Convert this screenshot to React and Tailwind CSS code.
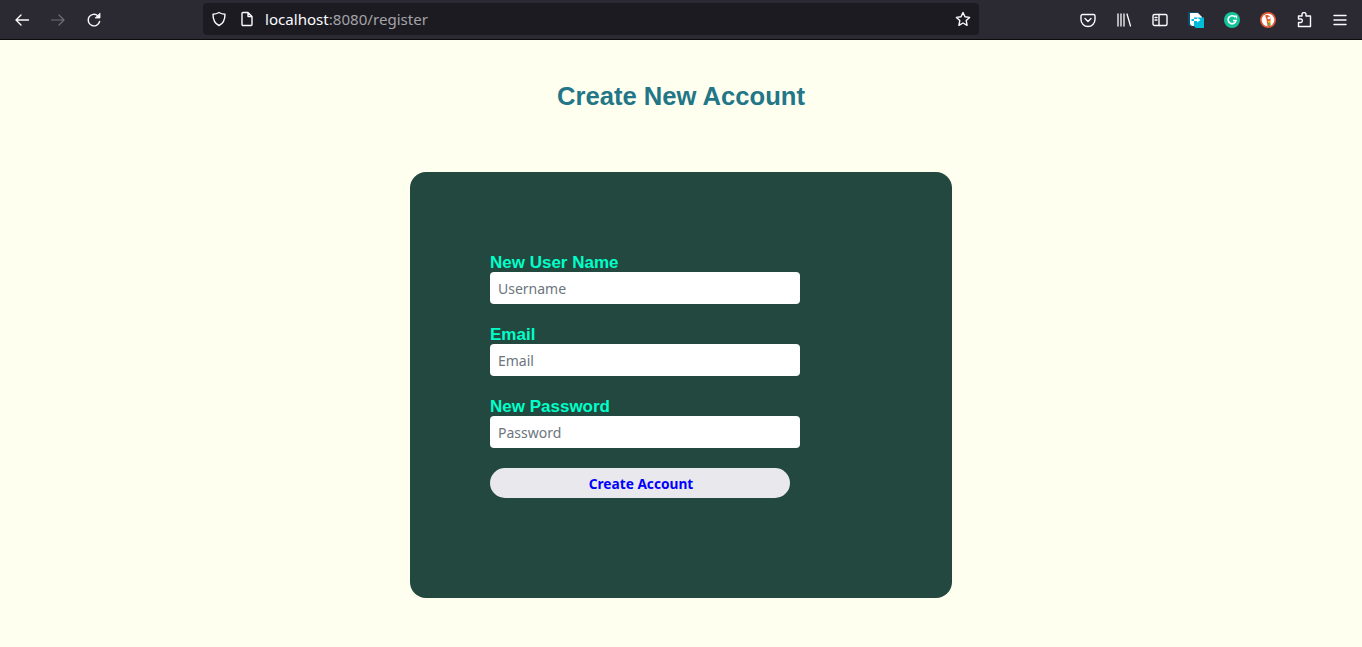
import React from "react";

const ui = { fontFamily: '"Noto Sans", "Open Sans", sans-serif' };
const arial = { fontFamily: '"Liberation Sans", Arial, sans-serif' };

function Ic({ children, className = "", vb = "0 0 16 16" }) {
  return (
    <svg viewBox={vb} width="16" height="16" fill="none" stroke="currentColor" strokeWidth="1.4" strokeLinecap="round" strokeLinejoin="round" className={className}>
      {children}
    </svg>
  );
}

function Slot({ children, color = "text-[#fbfbfe]" }) {
  return <div className={`w-9 h-8 flex items-center justify-center shrink-0 ${color}`}>{children}</div>;
}

function Field({ label, placeholder, type = "text" }) {
  return (
    <div className="flex flex-col items-start mb-[20px]">
      <label className="text-[17px] leading-[20px] font-bold text-[#00ffc8] h-[20px] pt-[1px]" style={arial}>{label}</label>
      <input
        type={type}
        placeholder={placeholder}
        className="w-[310px] h-[32px] bg-white rounded-[4px] px-2 text-[14px] text-[#495057] placeholder:text-[#6c757d] outline-none"
        style={ui}
      />
    </div>
  );
}

export default function App() {
  return (
    <div className="min-h-[647px] flex flex-col bg-[#fffff0] overflow-hidden">
      <div className="h-[40px] shrink-0 bg-[#2b2a33] border-b border-[#0c0c0d] flex items-center pl-[4px] pr-[4px]">
        <Slot>
          <Ic><path d="M14.500 8H2M7 3 2 8l5 5" strokeWidth="1.400" /></Ic>
        </Slot>
        <Slot color="text-[#6f6e77]">
          <Ic><path d="M1.500 8H14M9 3l5 5-5 5" strokeWidth="1.200" /></Ic>
        </Slot>
        <Slot>
          <Ic>
            <path d="M13.600 9.500A5.800 5.800 0 1 1 11.800 3.700" />
            <path d="M14 1.500V6H9.500Z" fill="currentColor" strokeWidth="0.800" />
          </Ic>
        </Slot>
        <div className="ml-[91px] w-[776px] h-[32px] rounded-[4px] bg-[#1c1b22] flex items-center mt-[-1px] shrink-0">
          <div className="w-[32px] flex justify-center text-[#fbfbfe]">
            <Ic><path d="M8 1.500c2 1.200 3.800 1.600 6 1.700 0 5.300-1.600 9.300-6 11.300C3.600 12.500 2 8.500 2 3.200c2.200-.1 4-.5 6-1.700Z" /></Ic>
          </div>
          <div className="w-[24px] flex justify-center text-[#fbfbfe]">
            <Ic><path d="M3 2.500A1 1 0 0 1 4 1.500h5L13 5.500v8a1 1 0 0 1-1 1H4a1 1 0 0 1-1-1ZM9 1.500V5.500h4" /></Ic>
          </div>
          <div className="ml-[6px] pt-[1px] text-[15.100px] text-[#fbfbfe] leading-none whitespace-nowrap" style={ui}>
            localhost<span className="text-[#a4a3a8]">:8080/register</span>
          </div>
          <div className="ml-auto w-[32px] flex justify-center text-[#fbfbfe]">
            <Ic><path d="m8 1.500 2 4.300 4.600.6-3.400 3.200.9 4.700L8 12l-4.100 2.300.9-4.700L1.400 6.400 6 5.800Z" /></Ic>
          </div>
        </div>
        <div className="ml-auto flex items-center">
          <Slot>
            <Ic><path d="M2.500 2.500h11A1.500 1.500 0 0 1 15 4v3.500a7 7 0 0 1-14 0V4a1.500 1.500 0 0 1 1.500-1.500Z" /><path d="m5 6.500 3 3 3-3" /></Ic>
          </Slot>
          <Slot>
            <Ic><path d="M2 2v12M5 2v12M8 2v12M11 2l3.500 12" strokeWidth="1.300" /></Ic>
          </Slot>
          <Slot>
            <Ic><rect x="1" y="2.500" width="14" height="11" rx="1.500" /><path d="M7 2.500v11M3 5.500h2M3 8h2" /></Ic>
          </Slot>
          <Slot>
            <svg viewBox="0 0 16 16" width="16" height="16">
              <path d="M0 0h10l1 1H2v10a3 3 0 0 0 3 3H2a2 2 0 0 1-2-2Z" fill="#0b4f73" />
              <path d="M2 1h8l4 4v1H6v8H5a3 3 0 0 1-3-3Z" fill="#ffffff" />
              <path d="M6 5.500h10V16H9a3 3 0 0 1-3-3Z" fill="#00bcd9" />
              <path d="M3.500 7h2.500v2H3.500Z" fill="#00bcd9" />
              <path d="M6 7h3V5.500L12.500 8 9 10.500V9H6Z" fill="#ffffff" />
            </svg>
          </Slot>
          <Slot>
            <svg viewBox="0 0 16 16" width="16" height="16">
              <circle cx="8" cy="8" r="8" fill="#15c39a" />
              <path d="M11.300 5.300A4 4 0 1 0 12 8.500H9" fill="none" stroke="#fff" strokeWidth="1.600" />
              <path d="M10 4h2.500v2.500" fill="none" stroke="#fff" strokeWidth="1.200" />
            </svg>
          </Slot>
          <Slot>
            <svg viewBox="0 0 16 16" width="16" height="16">
              <circle cx="8" cy="8" r="8" fill="#de5833" />
              <circle cx="8" cy="8" r="6.300" fill="#fff" />
              <path d="M5 3.500c3-1.500 6 .5 5.500 4L10 14H7.500L6.500 7.500C6.300 6 5.500 5 5 3.500Z" fill="#de5833" />
              <circle cx="8.800" cy="6" r="1.300" fill="#fff" />
              <path d="M7.500 9h3.500l-.5 1.500H8Z" fill="#fdd20a" />
              <path d="M8 11.500 10.500 11l.3 2-2.500.5Z" fill="#65bc46" />
            </svg>
          </Slot>
          <Slot>
            <Ic><path d="M2.500 4H6V2.500a2 2 0 0 1 4 0V4h4.500v10.500H2.500v-4H5a1.800 1.800 0 0 0 0-3.500H2.500Z" /></Ic>
          </Slot>
          <Slot>
            <Ic><path d="M2 3.500h12M2 8h12M2 12.500h12" /></Ic>
          </Slot>
        </div>
      </div>
      <main className="flex flex-col items-center">
        <h1 className="mt-[40px] h-[32px] text-[25.600px] leading-[32px] font-bold text-[#227687] whitespace-nowrap" style={arial}>
          Create New Account
        </h1>
        <div className="mt-[60px] w-[542px] h-[426px] rounded-[16px] bg-[#234840] pl-[80px] pt-[80px]">
          <Field label="New User Name" placeholder="Username" />
          <Field label="Email" placeholder="Email" type="email" />
          <Field label="New Password" placeholder="Password" type="password" />
          <button
            className="w-[300px] h-[30px] rounded-full bg-[#e9e9ed] text-[#0000ff] text-[13.700px] font-bold leading-none pl-[2px] pt-[2px]"
            style={ui}
          >
            Create Account
          </button>
        </div>
      </main>
    </div>
  );
}
